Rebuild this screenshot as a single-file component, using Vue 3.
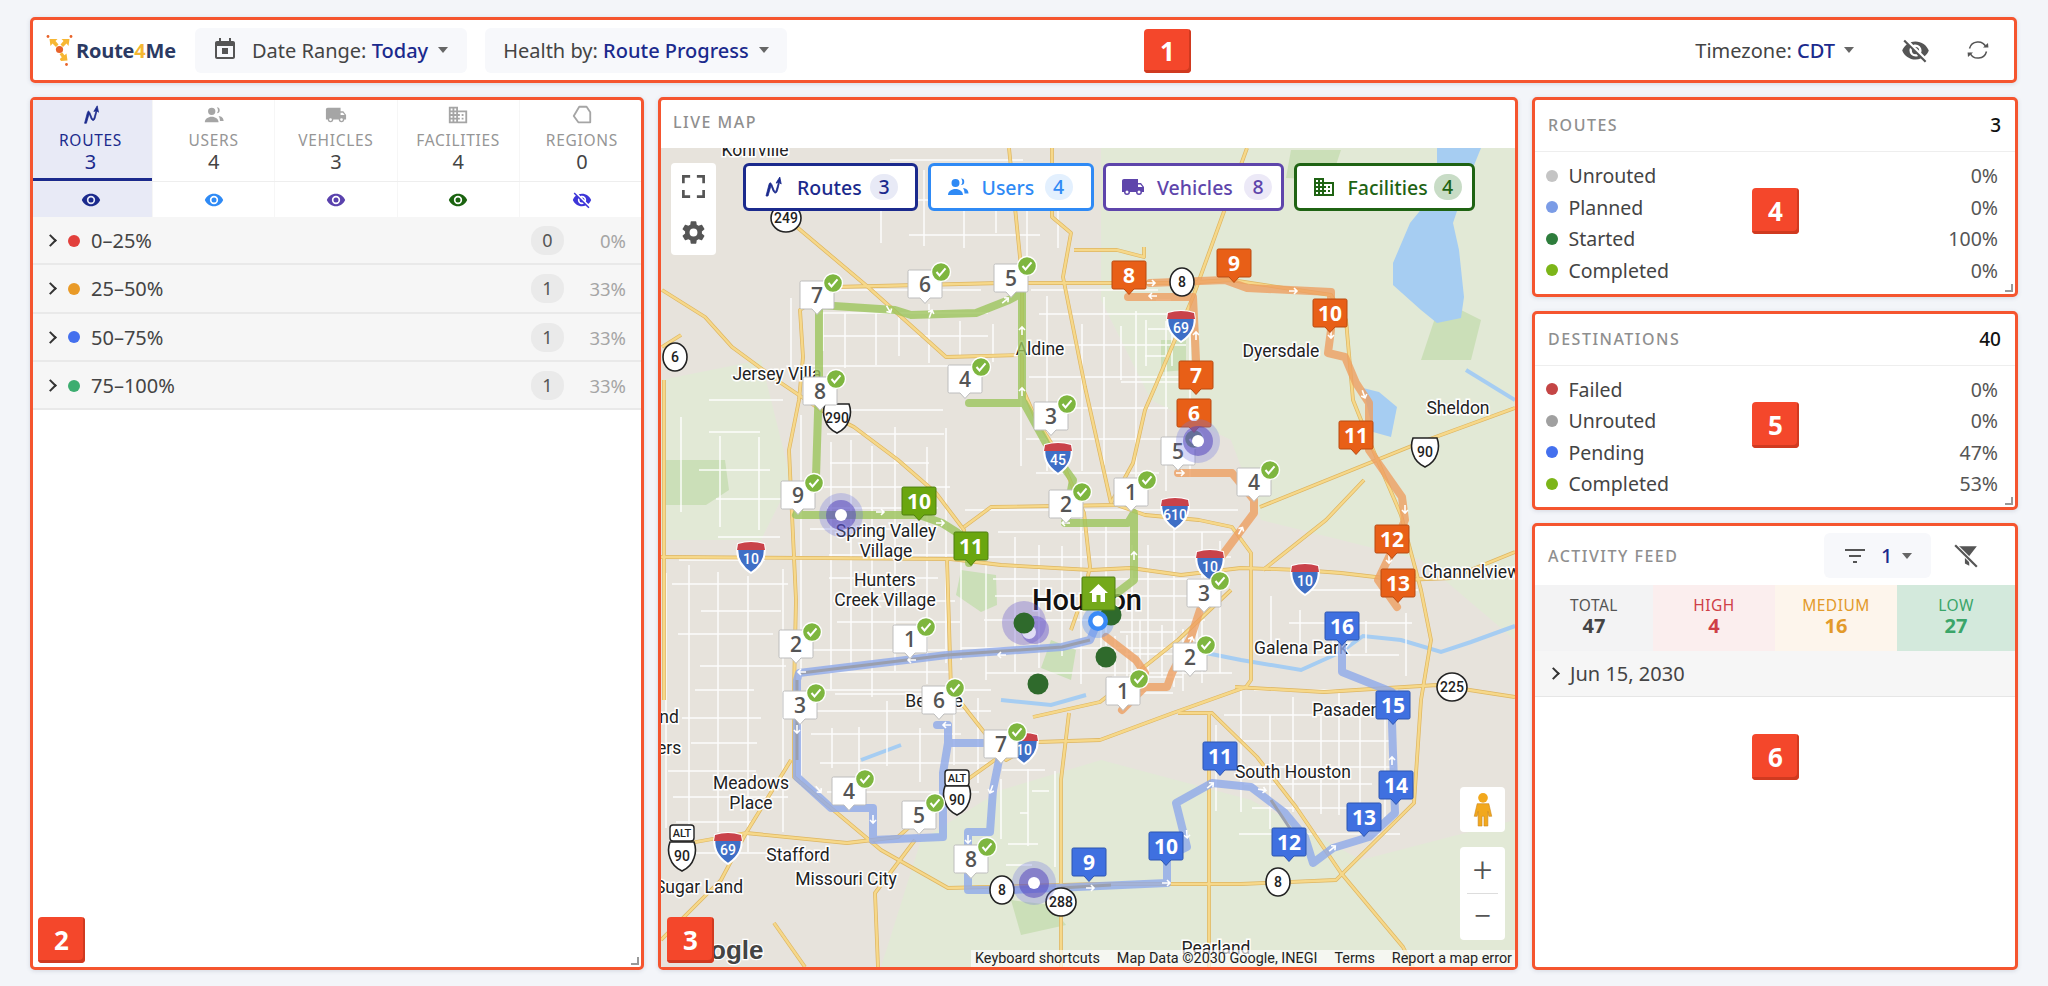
<template>
  <div class="page">
    <!-- top bar -->
    <header class="panel topbar">
      <div class="logo">
        <svg class="logo-mark" viewBox="0 0 26 31">
          <circle cx="1.5" cy="1.5" r="1.4" fill="#e8632a" />
          <circle cx="24.5" cy="1.5" r="1.4" fill="#e8632a" />
          <circle cx="20" cy="29.5" r="1.4" fill="#e8632a" />
          <path d="M3 4h8l-2 2 3 3.5-2.5 2.5L6 8.5 4 11zM23 4h-8l2 2-3 3.5 2.5 2.5L20 8.5l2 2.5zM14.5 26l6.5-.5-1-7-2 1.8-2.2-2.8-2.8 1.6 2.3 3.2-2 1.7z" fill="#f7b733" />
          <circle cx="13" cy="14.5" r="3.6" fill="#e8632a" />
        </svg>
        <span class="logo-text">Route<em>4</em>Me</span>
      </div>
      <button class="tool-btn">
        <svg class="cal-icon" viewBox="0 0 22 24"><path :d="calendarPath" fill="#555" /></svg>
        <span>Date Range: <b>Today</b></span>
        <i class="caret"></i>
      </button>
      <button class="tool-btn health">
        <span>Health by: <b>Route Progress</b></span>
        <i class="caret"></i>
      </button>
      <div class="top-right">
        <span class="tz">Timezone: <b>CDT</b></span>
        <i class="caret"></i>
        <svg class="eye-top" viewBox="0 0 24 24"><path :d="eyeOffPath" fill="#555" /></svg>
        <svg class="refresh" viewBox="0 0 24 24" fill="none" stroke="#555" stroke-width="1.5">
          <path d="M3.5 10.5A8.8 8.8 0 0 1 20 9" />
          <path d="M20.5 13.5A8.8 8.8 0 0 1 4 15" />
          <path d="M17 9.5h5.4L22 5z" fill="#555" stroke="none" />
          <path d="M7 14.5H1.6L2 19z" fill="#555" stroke="none" />
        </svg>
      </div>
      <span class="num-badge badge-1">1</span>
    </header>

    <!-- left list -->
    <section class="panel left">
      <div class="tabs">
        <div v-for="t in tabs" :key="t.label" class="tab" :class="{ active: t.active }">
          <svg class="tab-icon" viewBox="0 0 24 24">
            <path v-if="t.icon === 'region'" d="M9 3h8l4 6v11H8l-5-7z" fill="none" stroke="#a5a5a5" stroke-width="2" stroke-linejoin="round" />
            <path v-else :d="icons[t.icon]" :fill="t.active ? navy : '#a5a5a5'" :stroke="t.icon === 'route' ? navy : 'none'" :stroke-width="t.icon === 'route' ? 0.8 : 0" />
          </svg>
          <div class="tab-label">{{ t.label }}</div>
          <div class="tab-count">{{ t.count }}</div>
        </div>
      </div>
      <div class="eyes">
        <div v-for="t in tabs" :key="t.label" class="eye-cell" :class="{ active: t.active }">
          <svg viewBox="0 0 24 24"><path :d="t.off ? eyeOffPath : eyePath" :fill="t.eye" /></svg>
        </div>
      </div>
      <div v-for="r in healthRows" :key="r.label" class="health-row">
        <i class="chev"></i>
        <i class="dot" :style="{ background: r.color }"></i>
        <span class="health-label">{{ r.label }}</span>
        <span class="count-pill">{{ r.count }}</span>
        <span class="health-pct">{{ r.pct }}</span>
      </div>
      <i class="grip"></i>
      <span class="num-badge badge-2">2</span>
    </section>

    <!-- live map -->
    <section class="panel center">
      <div class="card-title map-title">LIVE MAP</div>
      <div class="map">
        <svg class="map-svg" viewBox="660 148 854 819" preserveAspectRatio="xMinYMin slice">
          <rect x="660" y="148" width="854" height="819" fill="#e7e3dc" />
          <path v-for="(p, i) in greens" :key="'g' + i" :d="p" fill="#e2e9d6" />
          <path v-for="(p, i) in parks" :key="'k' + i" :d="p" fill="#cbdfb8" />
          <path v-for="(p, i) in waters" :key="'w' + i" :d="p" fill="#a6cdf2" />
          <path v-for="(p, i) in rivers" :key="'r' + i" :d="p" fill="none" stroke="#a6cdf2" stroke-width="4" />
          <path :d="streetPath" fill="none" stroke="#fff" stroke-width="1.5" opacity="0.9" />
          <path v-for="(p, i) in highways" :key="'h' + i" :d="p" fill="none" stroke="#deb662" stroke-width="3.800" stroke-linejoin="round" />
          <path v-for="(p, i) in highways" :key="'i' + i" :d="p" fill="none" stroke="#f6d88a" stroke-width="2.400" stroke-linejoin="round" />

          <text v-for="l in labels" :key="l[0] + l[2]" class="map-label" :x="l[1]" :y="l[2]">{{ l[0] }}</text>
          <text class="map-city" x="1086" y="610">Houston</text>

          <path :d="greenRoute" class="route" stroke="#9cc45c" />
          <path :d="orangeRoute" class="route" stroke="#ee9f62" />
          <path :d="blueRoute" class="route" stroke="#8ea9ea" />
          <path :d="blueCore" fill="none" stroke="#9a9fae" stroke-width="3" />
          <path v-for="(a, i) in arrows" :key="'a' + i" d="M-5 0h8m-3-3 3 3-3 3" fill="none" stroke="#fff" stroke-width="1.6" :transform="`translate(${a[0]} ${a[1]}) rotate(${a[2]})`" />

          <g v-for="(s, i) in shields" :key="'s' + i" :transform="`translate(${s.x} ${s.y})`">
            <template v-if="s.kind === 'i'">
              <path d="M-13-13Q0-17 13-13 17 5 0 16-17 5-13-13z" fill="#3f6fc6" stroke="#fff" stroke-width="2" />
              <path d="M-13-13Q0-17 13-13l1 6h-28z" fill="#c9424a" />
              <text class="shield-text white" y="7">{{ s.t }}</text>
            </template>
            <template v-else-if="s.kind === 'us'">
              <path d="M-12-14h24q3 8 0 16Q9 11 0 15-9 11-12 2q-3-8 0-16z" fill="#fff" stroke="#222" stroke-width="1.6" />
              <text class="shield-text" y="5">{{ s.t }}</text>
            </template>
            <template v-else-if="s.kind === 'alt'">
              <rect x="-12" y="-8" width="24" height="16" rx="3" fill="#fff" stroke="#222" stroke-width="1.4" />
              <text class="shield-text small" y="4">ALT</text>
            </template>
            <template v-else>
              <ellipse :rx="s.t.length > 1 ? 15 : 12" ry="14" fill="#fff" stroke="#222" stroke-width="1.6" />
              <text class="shield-text" y="5">{{ s.t }}</text>
            </template>
          </g>

          <g v-for="m in markers" :key="m.key" :transform="`translate(${m.x} ${m.y})`">
            <path :d="pinPath" :fill="m.fill" :stroke="m.line" stroke-width="1" />
            <text class="pin-text" :class="{ thin: m.cx }" :fill="m.ink" y="21.500">{{ m.t }}</text>
            <g v-if="m.cx" :transform="`translate(${m.cx} ${m.cy})`">
              <circle r="9.500" fill="#7eb63f" stroke="#fff" stroke-width="1.4" />
              <path d="M-4.500 0l3 3.400L4.500-3.600" fill="none" stroke="#fff" stroke-width="2" />
            </g>
          </g>

          <g v-for="p in pulses" :key="p[0]" :transform="`translate(${p[0]} ${p[1]})`">
            <circle r="22" fill="#6f78e0" opacity="0.3" />
            <circle r="15" fill="#5547bd" opacity="0.55" />
            <circle r="6" fill="#fff" />
          </g>
          <circle cx="1023" cy="623" r="22" fill="#6a5acd" opacity="0.35" />
          <circle cx="1034" cy="630" r="14" fill="#6a5acd" opacity="0.5" />
          <circle cx="1028" cy="632" r="7" fill="#e0dcf5" />
          <circle cx="1097" cy="622" r="16" fill="#4f8df5" opacity="0.35" />
          <circle v-for="d in greenDots" :key="d[0]" :cx="d[0]" :cy="d[1]" r="10.500" fill="#2f6a2c" />
          <circle cx="1097" cy="621" r="10" fill="#3a8af7" />
          <circle cx="1097" cy="621" r="5.500" fill="#fff" />
          <g transform="translate(1081 577)">
            <path d="M1 0h31q1 0 1 1v31q0 1-1 1H1q-1 0-1-1V1q0-1 1-1z" fill="#74a91a" stroke="#4d7d10" stroke-width="1" />
            <path d="M16.500 7 7 16h3v9h13v-9h3z" fill="#fff" />
            <rect x="14.500" y="18" width="4" height="7" fill="#74a91a" />
          </g>
          <text class="google" x="673" y="959">Google</text>
        </svg>

        <div class="map-tools">
          <svg viewBox="0 0 24 24" fill="none" stroke="#555" stroke-width="2.400">
            <path d="M3 9V3h6M15 3h6v6M21 15v6h-6M9 21H3v-6" />
          </svg>
          <svg viewBox="0 0 24 24"><path :d="gearPath" fill="#555" /></svg>
        </div>

        <div class="pills">
          <div
            v-for="p in pills"
            :key="p.label"
            class="pill"
            :style="{ borderColor: p.color, color: p.color, width: p.width + 'px', paddingRight: p.pad + 'px' }"
          >
            <svg viewBox="0 0 24 24">
              <path :d="icons[p.icon]" :fill="p.color" :stroke="p.icon === 'route' ? p.color : 'none'" :stroke-width="p.icon === 'route' ? 0.8 : 0" />
            </svg>
            <span>{{ p.label }}</span>
            <em :style="{ background: p.tint }">{{ p.count }}</em>
          </div>
        </div>

        <div class="peg">
          <svg viewBox="0 0 20 36">
            <circle cx="10" cy="6" r="5" fill="#f2a81d" />
            <path d="M4 12h12l3 13h-3l-1-5v15h-4V25H9v10H5V20l-1 5H1z" fill="#f2a81d" stroke="#c9851a" stroke-width="0.6" />
          </svg>
        </div>
        <div class="zoom">
          <span>+</span>
          <i></i>
          <span>−</span>
        </div>
        <div class="attrib">
          <span>Keyboard shortcuts</span>
          <span>Map Data ©2030 Google, INEGI</span>
          <span>Terms</span>
          <span>Report a map error</span>
        </div>
      </div>
      <span class="num-badge badge-3">3</span>
    </section>

    <!-- right column -->
    <div class="right">
      <section v-for="c in summary" :key="c.title" class="panel stat-card">
        <div class="card-head">
          <span class="card-title">{{ c.title }}</span>
          <span class="card-total">{{ c.total }}</span>
        </div>
        <div class="stat-rows">
          <div v-for="r in c.rows" :key="r.label" class="stat-row">
            <i class="dot" :style="{ background: r.color }"></i>
            <span class="stat-label">{{ r.label }}</span>
            <span class="stat-pct">{{ r.pct }}</span>
          </div>
        </div>
        <i class="grip"></i>
        <span class="num-badge" :class="c.badgeClass">{{ c.badge }}</span>
      </section>

      <section class="panel feed">
        <div class="feed-head">
          <span class="card-title">ACTIVITY FEED</span>
          <button class="filter-btn">
            <svg viewBox="0 0 24 24" fill="none" stroke="#555" stroke-width="2.200"><path d="M2 6h20M6 12h12M10 18h4" /></svg>
            <b>1</b>
            <i class="caret"></i>
          </button>
          <svg class="filter-off" viewBox="0 0 24 24">
            <path d="M5 3h17l-7 9v9l-4-2v-6z" fill="#555" />
            <path d="M2 2l20 20" stroke="#fff" stroke-width="4" />
            <path d="M2 2l20 20" stroke="#555" stroke-width="2" />
          </svg>
        </div>
        <div class="levels">
          <div v-for="l in levels" :key="l.label" class="level" :style="{ background: l.bg, color: l.color }">
            <span>{{ l.label }}</span>
            <b :style="{ color: l.num }">{{ l.count }}</b>
          </div>
        </div>
        <div class="date-row"><i class="chev"></i><span>Jun 15, 2030</span></div>
        <span class="num-badge badge-6">6</span>
      </section>
    </div>
  </div>
</template>

<script setup>
const navy = '#1b2a8d'

const eyePath = 'M12 9a3 3 0 0 0-3 3 3 3 0 0 0 3 3 3 3 0 0 0 3-3 3 3 0 0 0-3-3m0 8a5 5 0 0 1-5-5 5 5 0 0 1 5-5 5 5 0 0 1 5 5 5 5 0 0 1-5 5m0-12.5C7 4.5 2.73 7.61 1 12c1.73 4.39 6 7.5 11 7.5s9.27-3.11 11-7.5c-1.73-4.39-6-7.5-11-7.5'
const eyeOffPath = 'M11.83 9 15 12.16V12a3 3 0 0 0-3-3zm-4.3.8 1.55 1.55c-.05.21-.08.42-.08.65a3 3 0 0 0 3 3c.22 0 .44-.03.65-.08l1.55 1.55c-.67.33-1.41.53-2.2.53a5 5 0 0 1-5-5c0-.79.2-1.53.53-2.2M2 4.27l2.28 2.28.45.45C3.08 8.3 1.78 10 1 12c1.73 4.39 6 7.5 11 7.5 1.55 0 3.03-.3 4.38-.84l.43.42L19.73 22 21 20.73 3.27 3M12 7a5 5 0 0 1 5 5c0 .64-.13 1.26-.36 1.82l2.93 2.93c1.5-1.25 2.7-2.89 3.43-4.75-1.73-4.39-6-7.5-11-7.5-1.4 0-2.74.25-4 .7l2.17 2.15C10.74 7.13 11.35 7 12 7'
const calendarPath = 'M19 21H3c-1.1 0-2-.9-2-2V5c0-1.1.9-2 2-2h2V0h2v3h8V0h2v3h2c1.1 0 2 .9 2 2v14c0 1.1-.9 2-2 2zM3 8v11h16V8zm5 2h6v6H8z'
const gearPath = 'M12 15.5A3.5 3.5 0 0 1 8.5 12 3.5 3.5 0 0 1 12 8.5a3.5 3.5 0 0 1 3.5 3.5 3.5 3.5 0 0 1-3.5 3.5m7.43-2.53c.04-.32.07-.64.07-.97s-.03-.66-.07-1l2.11-1.63c.19-.15.24-.42.12-.64l-2-3.46c-.12-.22-.39-.31-.61-.22l-2.49 1c-.52-.39-1.06-.73-1.69-.98l-.37-2.65A.506.506 0 0 0 14 2h-4c-.25 0-.46.18-.5.42l-.37 2.65c-.63.25-1.17.59-1.69.98l-2.49-1c-.22-.09-.49 0-.61.22l-2 3.46c-.13.22-.07.49.12.64L4.57 11c-.04.34-.07.67-.07 1s.03.65.07.97l-2.11 1.66c-.19.15-.25.42-.12.64l2 3.46c.12.22.39.3.61.22l2.49-1.01c.52.4 1.06.74 1.69.99l.37 2.65c.04.24.25.42.5.42h4c.25 0 .46-.18.5-.42l.37-2.65c.63-.26 1.17-.59 1.69-.99l2.49 1.01c.22.08.49 0 .61-.22l2-3.46c.12-.22.07-.49-.12-.64z'

const icons = {
  route: 'M5 21 8 9.5Q9 6 10.8 9.500L13.200 15.500Q14.500 18 15.300 15L17.500 7.500l-2.400.6L18.800 2l1.400 7-1.700-1.500L16.500 15.500Q15 20 12.300 16.500L10 10.500 7 21z',
  user: 'M9.500 4a4 4 0 1 0 0 8 4 4 0 0 0 0-8zM2 20c0-3.500 3.500-6 7.500-6s7.500 2.500 7.500 6zM15 3.500a3.200 3.200 0 0 1 0 6.500c1-1 1.300-2 1.300-3.200S16 4.500 15 3.500zM17 13c3 .3 5.500 2 5.500 5.500H18.500c0-2-.5-4-1.500-5.500z',
  truck: 'M18 18.500a1.500 1.500 0 0 1-1.500-1.500 1.500 1.500 0 0 1 1.500-1.500 1.500 1.500 0 0 1 1.500 1.500 1.500 1.500 0 0 1-1.500 1.500m1.500-9 1.960 2.500H17V9.500M6 18.500A1.500 1.500 0 0 1 4.500 17 1.500 1.500 0 0 1 6 15.500 1.500 1.500 0 0 1 7.500 17 1.500 1.500 0 0 1 6 18.500M20 8h-3V4H3c-1.110 0-2 .89-2 2v11h2a3 3 0 0 0 3 3 3 3 0 0 0 3-3h6a3 3 0 0 0 3 3 3 3 0 0 0 3-3h2v-5z',
  domain: 'M18 15h-2v2h2m0-6h-2v2h2m2 6h-8v-2h2v-2h-2v-2h2v-2h-2V9h8M10 7H8V5h2m0 6H8V9h2m0 6H8v-2h2m0 6H8v-2h2M6 7H4V5h2m0 6H4V9h2m0 6H4v-2h2m0 6H4v-2h2m6-10V3H2v18h20V7z'
}

const tabs = [
  { label: 'ROUTES', count: 3, icon: 'route', eye: navy, active: true },
  { label: 'USERS', count: 4, icon: 'user', eye: '#2f8af5' },
  { label: 'VEHICLES', count: 3, icon: 'truck', eye: '#5a42ad' },
  { label: 'FACILITIES', count: 4, icon: 'domain', eye: '#1b6310' },
  { label: 'REGIONS', count: 0, icon: 'region', eye: '#3d35d8', off: true }
]

const healthRows = [
  { label: '0–25%', color: '#e2403c', count: 0, pct: '0%' },
  { label: '25–50%', color: '#e99a27', count: 1, pct: '33%' },
  { label: '50–75%', color: '#4470ee', count: 1, pct: '33%' },
  { label: '75–100%', color: '#3dad70', count: 1, pct: '33%' }
]

const pills = [
  { label: 'Routes', count: 3, icon: 'route', color: navy, tint: '#e8eaf6', width: 175, pad: 17 },
  { label: 'Users', count: 4, icon: 'user', color: '#2f8af5', tint: '#e3f0fe', width: 166, pad: 18 },
  { label: 'Vehicles', count: 8, icon: 'truck', color: '#5e45ab', tint: '#ece9f7', width: 181, pad: 9 },
  { label: 'Facilities', count: 4, icon: 'domain', color: '#1f6313', tint: '#c8dcc6', width: 181, pad: 10 }
]

const summary = [
  {
    title: 'ROUTES', total: 3, badge: 4, badgeClass: 'badge-4',
    rows: [
      { label: 'Unrouted', color: '#c4c4c4', pct: '0%' },
      { label: 'Planned', color: '#7b9ce6', pct: '0%' },
      { label: 'Started', color: '#2e7d3c', pct: '100%' },
      { label: 'Completed', color: '#7cb518', pct: '0%' }
    ]
  },
  {
    title: 'DESTINATIONS', total: 40, badge: 5, badgeClass: 'badge-5',
    rows: [
      { label: 'Failed', color: '#c44545', pct: '0%' },
      { label: 'Unrouted', color: '#a0a0a0', pct: '0%' },
      { label: 'Pending', color: '#4470ee', pct: '47%' },
      { label: 'Completed', color: '#7cb518', pct: '53%' }
    ]
  }
]

const levels = [
  { label: 'TOTAL', count: 47, bg: '#f3f3f4', color: '#555', num: '#444' },
  { label: 'HIGH', count: 4, bg: '#fbeeee', color: '#cf3f47', num: '#cf3f47' },
  { label: 'MEDIUM', count: 16, bg: '#fdf5ec', color: '#e39a2a', num: '#e39a2a' },
  { label: 'LOW', count: 27, bg: '#d3e9dc', color: '#3aa569', num: '#3aa569' }
]

// map base
const greens = [
  'M1100 148H1514V640L1420 560 1260 520 1230 440 1150 400 1100 300z',
  'M920 840 1000 790 1100 760 1250 800 1360 860 1514 820V967H880z',
  'M660 380 760 360 790 480 760 540H660z'
]
const parks = [
  'M662 460H724L728 490 705 505H662z',
  'M960 570 995 575 996 605 980 612 955 595z',
  'M1050 640 1075 650 1070 680 1040 668z',
  'M1010 900 1050 905 1065 925 1020 935z',
  'M1160 340 1185 340 1185 370 1160 372z',
  'M1290 150 1340 150 1330 180 1285 178z',
  'M1440 300 1480 320 1470 360 1420 360z'
]
const waters = [
  'M1436 148H1480L1463 190 1452 223 1458 250 1463 297 1460 318 1436 323 1420 310 1392 285 1392 263 1409 223 1436 190z',
  'M1362 388 1378 392 1396 407 1390 437 1372 432z'
]
const rivers = [
  'M1340 652 1362 636 1400 640 1440 652 1470 642 1514 626',
  'M1190 650 1240 660 1300 670 1340 652',
  'M1000 700 1050 705 1085 695',
  'M1465 370 1514 400',
  'M860 760 900 745'
]
const highways = [
  'M834 287 1000 283 1110 283 1180 283 1230 280 1330 295 1345 320 1352 400 1370 445 1400 515 1420 590 1430 640 1420 700 1413 803 1335 880 1240 884 1100 884 947 888 880 850 830 808 793 777 793 690 795 600 788 450 798 400 802 357 799 310 834 287',
  'M661 290 704 317 731 347 780 383 820 410 853 427 897 460 935 493 963 530 966 560',
  'M791 223 867 287 945 357 1018 355',
  'M660 557 950 559 1000 565 1090 570 1130 568 1180 575 1240 568 1300 570 1340 573 1400 580 1450 578 1514 552',
  'M963 527 990 507 1116 505 1144 515 1198 520 1231 527 1250 553 1250 680 1245 687 1172 713 1099 740 1037 742 1005 760 950 690 946 560',
  'M1008 148 1021 277 1021 387 1034 417 1059 457 1083 513 1089 567 1083 593 1070 630',
  'M1246 148 1192 297 1154 387 1144 410 1132 463 1110 503',
  'M1051 148 1051 217 1070 233 1062 277 1084 387 1110 503',
  'M1073 250 1116 250 1143 257 1143 247',
  'M1068 713 1060 780 1060 967',
  'M998 757 942 797 897 837 846 843 745 833 678 845',
  'M1032 717 1099 702 1177 640 1230 590',
  'M1177 713 1211 713 1256 757 1295 807 1340 873 1402 947 1412 967',
  'M1208 713 1208 967',
  'M1234 687 1323 692 1436 685 1514 697',
  'M1259 507 1418 443 1514 408',
  'M1262 570 1325 520 1363 480',
  'M914 840 874 893 877 967',
  'M773 923 804 967',
  'M663 380 663 700',
  'M661 347 680 335',
  'M660 940 720 880 745 833 790 760'
]

const greenRoute = 'M818 305V380L817 413 815 477 795 515H918L941 523 968 540V563M818 305 894 310 910 315 975 313 1008 300 1021 293V403H968M1023 403 1045 443 1072 480 1064 523H1127L1133 513V580L1116 593'
const orangeRoute = 'M1127 297H1189M1149 283 1224 280 1246 288 1330 292V330L1327 353 1344 357 1355 383 1368 403V450L1401 497 1404 520 1388 557 1377 580 1396 607M1192 297 1195 360M1177 473H1231L1253 500V513L1220 557 1199 610 1190 637 1171 673 1166 687H1144L1121 710M1105 637 1135 660 1144 673'
const blueRoute = 'M1097 621 1089 640 1061 647 946 655 798 673 796 680V777L830 808H872V840L942 837V773L947 743H998M936 725H947V743M998 760 992 790 989 832H967V890H1009L1054 888 1166 883V857L1186 847 1175 803 1211 783 1250 787 1284 813 1304 837 1312 863 1332 848 1368 837 1394 813 1391 723 1391 692 1341 672V640'
const blueCore = 'M1089 640 1061 647 946 655 800 673M796 680V760M1060 888 1110 885M1270 800 1290 830'
const arrows = [
  [1151, 283, 0], [1151, 296, 180], [1293, 291, 0], [1330, 335, 90], [1363, 395, 70], [1404, 510, 90], [1388, 560, 90], [1180, 473, 0],
  [1195, 335, -90], [1240, 530, -60], [1190, 640, -70], [888, 310, 60], [930, 313, -70], [1005, 300, -40], [1021, 330, -90],
  [1133, 555, -90], [1064, 523, 180], [880, 512, 0], [940, 523, 0], [1021, 391, -90], [1000, 655, 180], [910, 660, 180], [800, 672, 180],
  [796, 730, 90], [818, 790, 50], [872, 820, 90], [945, 725, 180], [990, 790, 110], [967, 840, 90], [1090, 888, 0], [1166, 883, 0],
  [1186, 835, 85], [1210, 785, -40], [1262, 790, 10], [1332, 848, -40], [1391, 760, -90]
]

const labels = [
  ['Kohrville', 754, 156], ['Jersey Villa', 776, 380], ['Aldine', 1039, 355], ['Dyersdale', 1280, 357], ['Sheldon', 1457, 414],
  ['Spring Valley', 885, 537], ['Village', 885, 557], ['Hunters', 884, 586], ['Creek Village', 884, 606], ['Channelview', 1470, 578],
  ['Galena Park', 1300, 654], ['Pasadena', 1350, 716], ['South Houston', 1292, 778], ['Meadows', 750, 789], ['Place', 750, 809],
  ['Stafford', 797, 861], ['Missouri City', 845, 885], ['Sugar Land', 698, 893], ['Pearland', 1215, 954], ['Bellaire', 933, 707],
  ['Fort Bend', 640, 723], ['Four Corners', 630, 754]
]

const shields = [
  { kind: 'c', t: '249', x: 785, y: 218 }, { kind: 'c', t: '8', x: 1181, y: 282 }, { kind: 'i', t: '69', x: 1180, y: 326 },
  { kind: 'c', t: '6', x: 674, y: 357 }, { kind: 'us', t: '290', x: 836, y: 418 }, { kind: 'i', t: '45', x: 1057, y: 458 },
  { kind: 'us', t: '90', x: 1424, y: 452 }, { kind: 'i', t: '610', x: 1174, y: 513 }, { kind: 'i', t: '10', x: 750, y: 557 },
  { kind: 'i', t: '10', x: 1209, y: 565 }, { kind: 'i', t: '10', x: 1304, y: 579 }, { kind: 'i', t: '10', x: 1023, y: 748 },
  { kind: 'c', t: '225', x: 1451, y: 687 }, { kind: 'alt', t: '', x: 956, y: 778 }, { kind: 'us', t: '90', x: 956, y: 800 },
  { kind: 'alt', t: '', x: 681, y: 833 }, { kind: 'us', t: '90', x: 681, y: 856 }, { kind: 'i', t: '69', x: 727, y: 848 },
  { kind: 'c', t: '288', x: 1060, y: 902 }, { kind: 'c', t: '8', x: 1001, y: 890 }, { kind: 'c', t: '8', x: 1277, y: 882 }
]

const pulses = [[1197, 441], [840, 515], [1033, 883]]
const greenDots = [[1023, 623], [1110, 615], [1105, 657], [1037, 684]]

// pin: 33 wide body, little tip below
const pinPath = 'M-15.500 0h31q1.500 0 1.500 1.500v25q0 1.500-1.500 1.500H5l-5 5.500-5-5.500h-10.500q-1.500 0-1.500-1.500v-25Q-17 0-15.500 0z'

const white = (t, x, y, key) => ({ key, t, x, y, cx: 16, cy: 2, fill: '#fff', line: '#bdbdbd', ink: '#555' })
const solid = (t, x, y, fill, line, key) => ({ key, t, x, y, fill, line, ink: '#fff' })

const markers = [
  white(7, 816, 281, 'gw7'), white(6, 924, 270, 'gw6'), white(5, 1010, 264, 'gw5'), white(4, 964, 365, 'gw4'),
  white(8, 819, 377, 'gw8'), white(3, 1050, 402, 'gw3'), white(9, 797, 481, 'gw9'), white(2, 1065, 490, 'gw2'),
  white(1, 1130, 478, 'gw1'),
  white(5, 1177, 437, 'ow5'), white(4, 1253, 468, 'ow4'), white(3, 1203, 579, 'ow3'), white(2, 1189, 643, 'ow2'), white(1, 1122, 677, 'ow1'),
  white(2, 795, 630, 'bw2'), white(1, 909, 625, 'bw1'), white(3, 799, 691, 'bw3'), white(6, 938, 686, 'bw6'),
  white(7, 1000, 730, 'bw7'), white(4, 848, 777, 'bw4'), white(5, 918, 801, 'bw5'), white(8, 970, 845, 'bw8'),
  ...[[8, 1128, 261], [9, 1233, 249], [10, 1329, 299], [7, 1195, 361], [6, 1193, 399], [11, 1355, 421], [12, 1391, 525], [13, 1397, 569]]
    .map(m => solid(m[0], m[1], m[2], '#e85f17', '#b84a10', 'o' + m[0])),
  ...[[10, 918, 487], [11, 970, 532]].map(m => solid(m[0], m[1], m[2], '#6aa60f', '#4d7d10', 'g' + m[0])),
  ...[[9, 1088, 848], [10, 1165, 832], [11, 1219, 742], [12, 1288, 828], [13, 1363, 803], [14, 1395, 771], [15, 1392, 691], [16, 1341, 612]]
    .map(m => solid(m[0], m[1], m[2], '#3f70e0', '#2d55b0', 'b' + m[0]))
]

// side streets are filler: a seeded grid, so each render gives the same map
const streetPath = (() => {
  let seed = 7
  const rnd = (n) => {
    seed = (seed * 16807) % 2147483647
    return (seed % 1000) / 1000 * n
  }
  const blocks = [
    [790, 290, 1010, 380, 20], [1020, 290, 1190, 500, 22], [800, 410, 960, 700, 18], [960, 510, 1240, 690, 16],
    [1100, 620, 1210, 700, 11], [665, 560, 790, 860, 22], [800, 690, 1000, 800, 20], [1000, 740, 1060, 870, 20],
    [1215, 690, 1400, 840, 15], [1270, 590, 1420, 680, 26], [680, 400, 790, 540, 26], [880, 160, 1060, 270, 30], [1120, 300, 1200, 400, 24]
  ]
  let d = ''
  for (const [x0, y0, x1, y1, step] of blocks) {
    for (let y = y0; y < y1; y += step + rnd(12)) {
      const a = x0 + rnd(40)
      const b = x1 - rnd(40)
      d += `M${a | 0} ${y | 0}H${b | 0}`
    }
    for (let x = x0; x < x1; x += step + rnd(14)) {
      const a = y0 + rnd(40)
      const b = y1 - rnd(40)
      d += `M${x | 0} ${a | 0}V${b | 0}`
    }
  }
  return d
})()
</script>

<style scoped>
.page {
  display: grid;
  grid-template-columns: 614px 860px 486px;
  grid-template-rows: 66px 873px;
  column-gap: 14px;
  row-gap: 14px;
  padding: 17px 0 0 30px;
  width: 2048px;
  height: 986px;
  box-sizing: border-box;
  overflow: hidden;
  background: #f3f5f9;
  font-family: "Noto Sans", "Open Sans", sans-serif;
  color: #444;
}
.panel {
  position: relative;
  box-sizing: border-box;
  background: #fff;
  border: 3px solid #f5552f;
  border-radius: 5px;
  box-shadow: 0 1px 4px rgba(80, 90, 120, 0.18);
}
.num-badge {
  position: absolute;
  display: flex;
  align-items: center;
  justify-content: center;
  width: 47px;
  height: 46px;
  background: #f4472b;
  border-radius: 4px;
  box-shadow: inset -2px -3px 0 #d03a20;
  color: #fff;
  font-size: 26px;
  font-weight: 700;
  z-index: 5;
}
.badge-1 { left: 1111px; top: 9px; height: 44px; }
.badge-2 { left: 5px; bottom: 4px; }
.badge-3 { left: 6px; bottom: 4px; }
.badge-4 { left: 217px; top: 88px; }
.badge-5 { left: 217px; top: 88px; }
.badge-6 { left: 217px; top: 208px; }

.caret {
  display: inline-block;
  width: 0;
  height: 0;
  border-left: 5.500px solid transparent;
  border-right: 5.500px solid transparent;
  border-top: 6px solid #666;
}

/* top bar */
.topbar {
  grid-column: 1 / -1;
  width: 1987px;
  display: flex;
  align-items: center;
  padding-left: 13px;
}
.logo { display: flex; align-items: center; width: 149px; }
.logo-mark { width: 27px; height: 31px; margin-right: 3px; }
.logo-text { font-family: "Open Sans", sans-serif; font-size: 20px; font-weight: 700; color: #2b3a63; letter-spacing: -0.2px; }
.logo-text em { font-style: normal; color: #f5b731; }
.tool-btn {
  display: flex;
  align-items: center;
  height: 45px;
  padding: 0 19px;
  margin-right: 18px;
  border: none;
  border-radius: 6px;
  background: #f7f8fb;
  font-family: inherit;
  font-size: 20px;
  color: #444;
}
.tool-btn .caret { margin-left: 10px; }
.tool-btn b, .tz b, .filter-btn b { font-weight: 500; color: #1b2a8d; }
.cal-icon { width: 22px; height: 24px; margin-right: 16px; }
.health { padding: 0 18px; }
.top-right { margin-left: auto; display: flex; align-items: center; }
.tz { font-size: 20px; }
.top-right .caret { margin-left: 9px; }
.eye-top { width: 29px; height: 29px; margin-left: 47px; }
.refresh { width: 24px; height: 24px; margin: 0 24px 0 36px; }

/* left */
.left { display: flex; flex-direction: column; }
.tabs, .eyes { display: grid; grid-template-columns: 119px repeat(4, 1fr); }
.tabs { height: 81px; border-bottom: 1px solid #eee; }
.tab { position: relative; text-align: center; border-left: 1px solid #f6f6f6; }
.tab:first-child { border-left: none; padding-right: 4px; }
.tab:last-child { padding-left: 3px; }
.tab.active { background: #e8eaf6; box-shadow: inset 0 -3px 0 #1b2a8d; }
.tab-icon { display: block; width: 22px; height: 22px; margin: 4px auto 0; }
.tab-label { margin-top: 3px; font-size: 15.500px; line-height: 22px; letter-spacing: 0.7px; color: #969696; }
.tab.active .tab-label { color: #1b2a8d; }
.tab-count { font-size: 20px; line-height: 22px; color: #444; }
.tab.active .tab-count { color: #1b2a8d; }
.eyes { height: 35px; }
.eye-cell { display: flex; align-items: center; justify-content: center; border-left: 1px solid #f6f6f6; }
.eye-cell:first-child { border-left: none; padding-right: 4px; }
.eye-cell:last-child { padding-left: 3px; }
.eye-cell.active { background: #e8eaf6; }
.eye-cell svg { width: 20px; height: 20px; }
.health-row {
  display: flex;
  align-items: center;
  height: 48.300px;
  box-sizing: border-box;
  padding: 1px 15px 0 13px;
  background: #f6f6f6;
  border-bottom: 2px solid #e9e9e9;
  font-size: 20px;
}
.chev {
  display: inline-block;
  width: 7px;
  height: 7px;
  margin-right: 13px;
  border-top: 2px solid #333;
  border-right: 2px solid #333;
  transform: rotate(45deg);
}
.dot { width: 12px; height: 12px; border-radius: 50%; flex: none; }
.health-row .dot { margin-right: 11px; }
.health-label { flex: 1; color: #444; }
.count-pill {
  width: 33px;
  height: 29px;
  line-height: 29px;
  text-align: center;
  border-radius: 14px;
  background: #eaeaea;
  font-size: 18px;
  color: #555;
  margin-right: 16px;
}
.health-pct { width: 46px; text-align: right; color: #a5a5a5; font-size: 18.500px; }
.grip {
  position: absolute;
  right: 2px;
  bottom: 2px;
  width: 6px;
  height: 6px;
  border-right: 2px solid #999;
  border-bottom: 2px solid #999;
}

/* map */
.center { display: flex; flex-direction: column; overflow: visible; }
.card-title { font-size: 16px; letter-spacing: 1.500px; color: #8f8f8f; font-weight: 500; }
.map-title { height: 48px; line-height: 44px; padding-left: 12px; flex: none; }
.map { position: relative; flex: 1; overflow: hidden; }
.map-svg { position: absolute; left: 0; top: 0; width: 100%; height: 100%; display: block; }
.map-label {
  font-family: Roboto, sans-serif;
  font-size: 17.500px;
  text-anchor: middle;
  fill: #222;
  stroke: #fff;
  stroke-width: 3px;
  paint-order: stroke;
}
.map-city {
  font-family: Roboto, sans-serif;
  font-size: 29px;
  font-weight: 500;
  text-anchor: middle;
  fill: #111;
  stroke: #fff;
  stroke-width: 3px;
  paint-order: stroke;
}
.route { fill: none; stroke-width: 8px; stroke-linejoin: round; stroke-linecap: round; opacity: 0.8; }
.shield-text { font-family: Roboto, sans-serif; font-size: 14px; font-weight: 500; text-anchor: middle; fill: #222; }
.shield-text.white { fill: #fff; }
.shield-text.small { font-size: 11px; }
.pin-text { font-family: "Open Sans", sans-serif; font-size: 21px; font-weight: 700; text-anchor: middle; }
.pin-text.thin { font-weight: 600; }
.google {
  font-family: "Liberation Sans", sans-serif;
  font-size: 26px;
  font-weight: 700;
  fill: #444;
  stroke: #fff;
  stroke-width: 2.500px;
  paint-order: stroke;
}
.map-tools {
  position: absolute;
  left: 10px;
  top: 15px;
  width: 45px;
  height: 92px;
  background: #fff;
  border-radius: 4px;
  display: flex;
  flex-direction: column;
  align-items: center;
  padding-top: 10px;
  box-sizing: border-box;
  gap: 19px;
}
.map-tools svg { width: 27px; height: 27px; }
.pills { position: absolute; left: 82px; top: 15px; display: flex; gap: 9.500px; }
.pill {
  display: flex;
  align-items: center;
  box-sizing: border-box;
  height: 48px;
  padding-left: 15px;
  background: #fff;
  border: 3px solid;
  border-radius: 6px;
  font-size: 19.500px;
  font-weight: 500;
}
.pill svg { flex: none; width: 24px; height: 24px; margin-right: 12px; }
.pill em {
  flex: none;
  width: 28px;
  height: 26px;
  line-height: 26px;
  margin-left: auto;
  border-radius: 13px;
  font-style: normal;
  text-align: center;
}
.peg {
  position: absolute;
  left: 799px;
  top: 639px;
  width: 45px;
  height: 45px;
  background: #fff;
  border-radius: 4px;
  display: flex;
  align-items: center;
  justify-content: center;
}
.peg svg { width: 20px; height: 35px; }
.zoom {
  position: absolute;
  left: 799px;
  top: 699px;
  width: 45px;
  height: 93px;
  background: #fff;
  border-radius: 4px;
  text-align: center;
  color: #555;
  font-family: Roboto, sans-serif;
  font-size: 34px;
  font-weight: 300;
}
.zoom span { display: block; height: 46px; line-height: 44px; }
.zoom i { display: block; height: 1px; margin: 0 7px; background: #ddd; }
.attrib {
  position: absolute;
  right: 0;
  bottom: 0;
  left: 310px;
  height: 17px;
  display: flex;
  align-items: center;
  padding-left: 4px;
  background: rgba(255, 255, 255, 0.65);
  font-family: Roboto, sans-serif;
  font-size: 14.400px;
  color: #222;
  white-space: nowrap;
}
.attrib span + span { margin-left: 17px; }

/* right column */
.right {
  display: grid;
  grid-template-rows: 200px 199px 1fr;
  row-gap: 13.500px;
  height: 873px;
}
.stat-card { width: 486px; }
.card-head {
  display: flex;
  align-items: center;
  justify-content: space-between;
  height: 50px;
  padding: 0 14px 1px 13px;
  border-bottom: 1px solid #eee;
}
.card-total { font-size: 19px; font-weight: 500; color: #111; }
.stat-rows { padding-top: 8px; }
.stat-row { display: flex; align-items: center; height: 31.500px; padding: 0 17px 0 10.500px; font-size: 19.500px; }
.stat-row .dot { margin-right: 11px; }
.stat-label { flex: 1; color: #444; }
.stat-pct { color: #555; }
.feed { width: 486px; }
.feed-head { display: flex; align-items: center; height: 59px; padding-left: 13px; }
.feed-head .card-title { flex: 1; }
.filter-btn {
  display: flex;
  align-items: center;
  width: 107px;
  height: 45px;
  padding: 0 0 0 19px;
  border: none;
  border-radius: 6px;
  background: #f7f8fb;
  font-family: inherit;
  font-size: 20px;
}
.filter-btn svg { width: 24px; height: 24px; margin-right: 14px; }
.filter-btn .caret { margin-left: 10px; }
.filter-off { width: 26px; height: 26px; margin: 0 36px 0 22px; }
.levels { display: grid; grid-template-columns: 118px 122px 122px 1fr; height: 66px; }
.level { display: flex; flex-direction: column; align-items: center; padding-top: 9px; font-size: 15.500px; line-height: 22px; letter-spacing: 0.5px; box-sizing: border-box; }
.level b { font-size: 20px; line-height: 20px; font-weight: 700; letter-spacing: 0; }
.date-row {
  display: flex;
  align-items: center;
  height: 46px;
  padding-left: 14px;
  box-sizing: border-box;
  background: #f6f6f6;
  border-bottom: 1px solid #e6e6e6;
  font-size: 20px;
}
.date-row .chev { margin-right: 12px; }
</style>

<style>
html, body { margin: 0; background: #f3f5f9; }
</style>
